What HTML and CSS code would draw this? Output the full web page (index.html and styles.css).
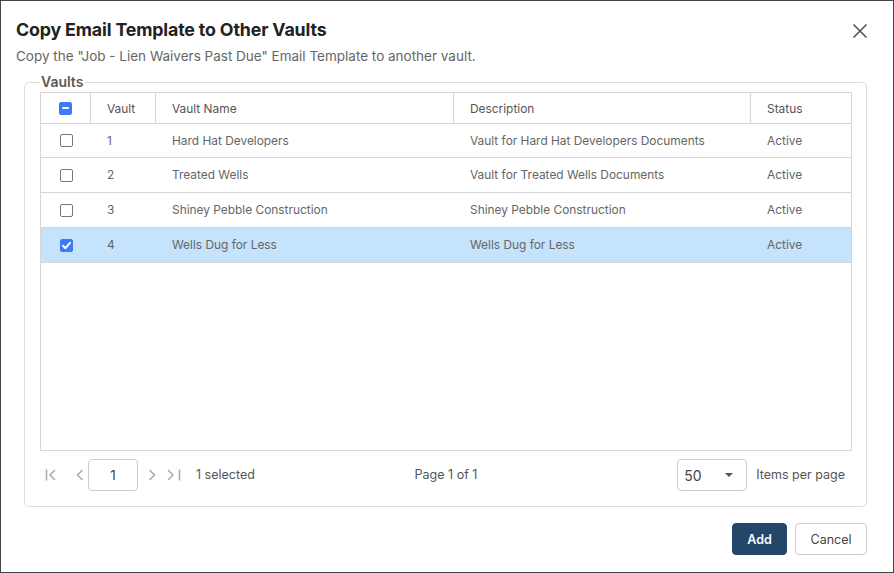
FILE: index.html
```html
<!DOCTYPE html>
<html lang="en">
<head>
<meta charset="utf-8">
<title>Copy Email Template to Other Vaults</title>
<link rel="stylesheet" href="styles.css">
</head>
<body>
<div class="dialog">
  <div class="dialog-head">
    <h1 class="title">Copy Email Template to Other Vaults</h1>
    <button class="close" aria-label="Close">
      <svg width="16" height="16" viewBox="0 0 16 16"><path d="M1.5 1.5 L14.5 14.5 M14.5 1.5 L1.5 14.5" stroke="#555" stroke-width="1.6" fill="none"/></svg>
    </button>
  </div>
  <p class="subtitle">Copy the "Job - Lien Waivers Past Due" Email Template to another vault.</p>

  <fieldset class="vaults">
    <legend class="legend">Vaults</legend>
    <div class="grid">
      <table class="table">
        <colgroup>
          <col class="c-check"><col class="c-vault"><col class="c-name"><col class="c-desc"><col class="c-status">
        </colgroup>
        <thead>
          <tr>
            <th class="check-cell"><span class="cb cb-partial"><span class="dash"></span></span></th>
            <th>Vault</th>
            <th>Vault Name</th>
            <th>Description</th>
            <th class="last">Status</th>
          </tr>
        </thead>
        <tbody>
          <tr>
            <td class="check-cell"><span class="cb"></span></td>
            <td>1</td><td>Hard Hat Developers</td><td>Vault for Hard Hat Developers Documents</td><td>Active</td>
          </tr>
          <tr>
            <td class="check-cell"><span class="cb"></span></td>
            <td>2</td><td>Treated Wells</td><td>Vault for Treated Wells Documents</td><td>Active</td>
          </tr>
          <tr>
            <td class="check-cell"><span class="cb"></span></td>
            <td>3</td><td>Shiney Pebble Construction</td><td>Shiney Pebble Construction</td><td>Active</td>
          </tr>
          <tr class="selected">
            <td class="check-cell"><span class="cb cb-checked"><svg width="13" height="13" viewBox="0 0 13 13"><path d="M3 6.8 L5.4 9.2 L10 3.8" stroke="#fff" stroke-width="2" fill="none" stroke-linecap="round" stroke-linejoin="round"/></svg></span></td>
            <td>4</td><td>Wells Dug for Less</td><td>Wells Dug for Less</td><td>Active</td>
          </tr>
        </tbody>
      </table>
    </div>

    <div class="pager">
      <div class="pager-left">
        <span class="pbtn first"><svg width="14" height="14" viewBox="0 0 14 14"><path d="M1.5 1.5 V12.5 M10 2 L5 7 L10 12" stroke="#aaa" stroke-width="1.5" fill="none"/></svg></span>
        <span class="pbtn prev"><svg width="10" height="14" viewBox="0 0 10 14"><path d="M7.5 2 L2.5 7 L7.5 12" stroke="#aaa" stroke-width="1.5" fill="none"/></svg></span>
        <span class="page-input">1</span>
        <span class="pbtn next"><svg width="10" height="14" viewBox="0 0 10 14"><path d="M2.5 2 L7.5 7 L2.5 12" stroke="#aaa" stroke-width="1.5" fill="none"/></svg></span>
        <span class="pbtn last"><svg width="14" height="14" viewBox="0 0 14 14"><path d="M1 2 L6 7 L1 12 M12.5 1.5 V12.5" stroke="#aaa" stroke-width="1.5" fill="none"/></svg></span>
        <span class="sel-count">1 selected</span>
      </div>
      <div class="pager-center">Page 1 of 1</div>
      <div class="pager-right">
        <span class="select"><span class="select-val">50</span><span class="caret"></span></span>
        <span class="ipp">Items per page</span>
      </div>
    </div>
  </fieldset>

  <div class="actions">
    <button class="btn btn-primary">Add</button>
    <button class="btn btn-secondary">Cancel</button>
  </div>
</div>
</body>
</html>
```

FILE: styles.css
```css
* { box-sizing: border-box; }

html, body {
  margin: 0;
  padding: 0;
  background: #fff;
}

body {
  font-family: Inter, "Noto Sans", "Liberation Sans", sans-serif;
  color: #555;
}

.dialog {
  width: 894px;
  height: 573px;
  border: 1px solid #444;
  background: #fff;
  display: flex;
  flex-direction: column;
}

.dialog-head {
  display: flex;
  align-items: center;
  justify-content: space-between;
  padding: 19px 25px 0 15px;
}

.title {
  margin: 0;
  font-size: 17.8px;
  line-height: 20px;
  font-weight: 700;
  color: #222;
  letter-spacing: -0.15px;
}

.close {
  border: 0;
  background: transparent;
  padding: 0;
  width: 16px;
  height: 16px;
  display: flex;
  margin-top: 2px;
}

.subtitle {
  margin: 7px 0 0 15px;
  font-size: 13.5px;
  line-height: 18px;
  color: #666;
}

.vaults {
  margin: 9px 26px 0 23px;
  padding: 2px 14px 15px 15px;
  border: 1px solid #ddd;
  border-radius: 5px;
  min-width: 0;
}

.legend {
  padding: 0 1px;
  margin-left: 0;
  font-size: 14px;
  line-height: 16px;
  font-weight: 600;
  color: #5a5a5a;
}

.grid {
  height: 359px;
  border: 1px solid #d6d6d6;
}

.table {
  width: 100%;
  table-layout: fixed;
  border-collapse: separate;
  border-spacing: 0;
  font-size: 11.9px;
}

.c-check { width: 50px; }
.c-vault { width: 65px; }
.c-name { width: 298px; }
.c-desc { width: 297px; }
.c-status { width: auto; }

.table th {
  height: 31px;
  font-weight: 400;
  color: #555;
  text-align: left;
  padding: 0 0 0 16px;
  border-bottom: 1px solid #d6d6d6;
  border-right: 1px solid #d6d6d6;
}

.table th.last { border-right: 0; }

.table td {
  height: 35px;
  color: #666;
  padding: 0 0 1px 16px;
  border-bottom: 1px solid #d6d6d6;
  white-space: nowrap;
}

.table tbody tr:first-child td { height: 34px; }

.table .check-cell {
  padding: 0;
  text-align: center;
}

.table tr.selected td { background: #c5e3fb; }

.cb {
  display: inline-block;
  vertical-align: middle;
  width: 13px;
  height: 13px;
  border: 1px solid #767676;
  border-radius: 2px;
  background: #fff;
  position: relative;
  top: -1px;
}

.cb-partial,
.cb-checked {
  border-color: #3c7bf5;
  background: #3c7bf5;
}

.cb-partial .dash {
  position: absolute;
  left: 2px;
  top: 4.5px;
  width: 7px;
  height: 2px;
  background: #fff;
  border-radius: 1px;
}

.cb-checked svg {
  position: absolute;
  left: -1px;
  top: -1px;
}

.pager {
  display: grid;
  grid-template-columns: 1fr auto 1fr;
  align-items: center;
  margin-top: 8px;
  height: 32px;
  font-size: 12.5px;
}

.pager-left {
  display: flex;
  align-items: center;
  padding-left: 5px;
}

.pbtn {
  display: flex;
  align-items: center;
}

.first { margin-right: 16px; }
.prev { margin-right: 3px; }
.next { margin-left: 9px; }
.last { margin-left: 10px; }

.page-input {
  width: 50px;
  height: 32px;
  border: 1px solid #ccc;
  border-radius: 4px;
  display: flex;
  align-items: center;
  justify-content: center;
  color: #444;
  font-size: 13.5px;
}

.sel-count {
  margin-left: 15px;
  color: #555;
  padding-bottom: 2px;
}

.pager-center {
  color: #555;
  text-align: center;
  padding-bottom: 2px;
}

.pager-right {
  display: flex;
  align-items: center;
  justify-content: flex-end;
  padding-right: 7px;
}

.select {
  width: 70px;
  height: 32px;
  border: 1px solid #ccc;
  border-radius: 4px;
  display: flex;
  align-items: center;
  justify-content: space-between;
  padding: 0 13px 0 6px;
  font-size: 14px;
  color: #444;
}

.caret {
  width: 0;
  height: 0;
  border-left: 4.5px solid transparent;
  border-right: 4.5px solid transparent;
  border-top: 4.5px solid #555;
}

.ipp {
  margin-left: 9px;
  color: #555;
  padding-bottom: 2px;
}

.actions {
  display: flex;
  justify-content: flex-end;
  gap: 8px;
  margin: 16px 26px 0 0;
}

.btn {
  height: 32px;
  border-radius: 4px;
  font-family: Inter, "Noto Sans", "Liberation Sans", sans-serif;
  font-size: 12.5px;
  padding: 0;
}

.btn-primary {
  width: 55px;
  background: #23466a;
  border: 1px solid #23466a;
  color: #fff;
  font-weight: 600;
}

.btn-secondary {
  width: 72px;
  background: #fff;
  border: 1px solid #ccc;
  color: #444;
}
```
